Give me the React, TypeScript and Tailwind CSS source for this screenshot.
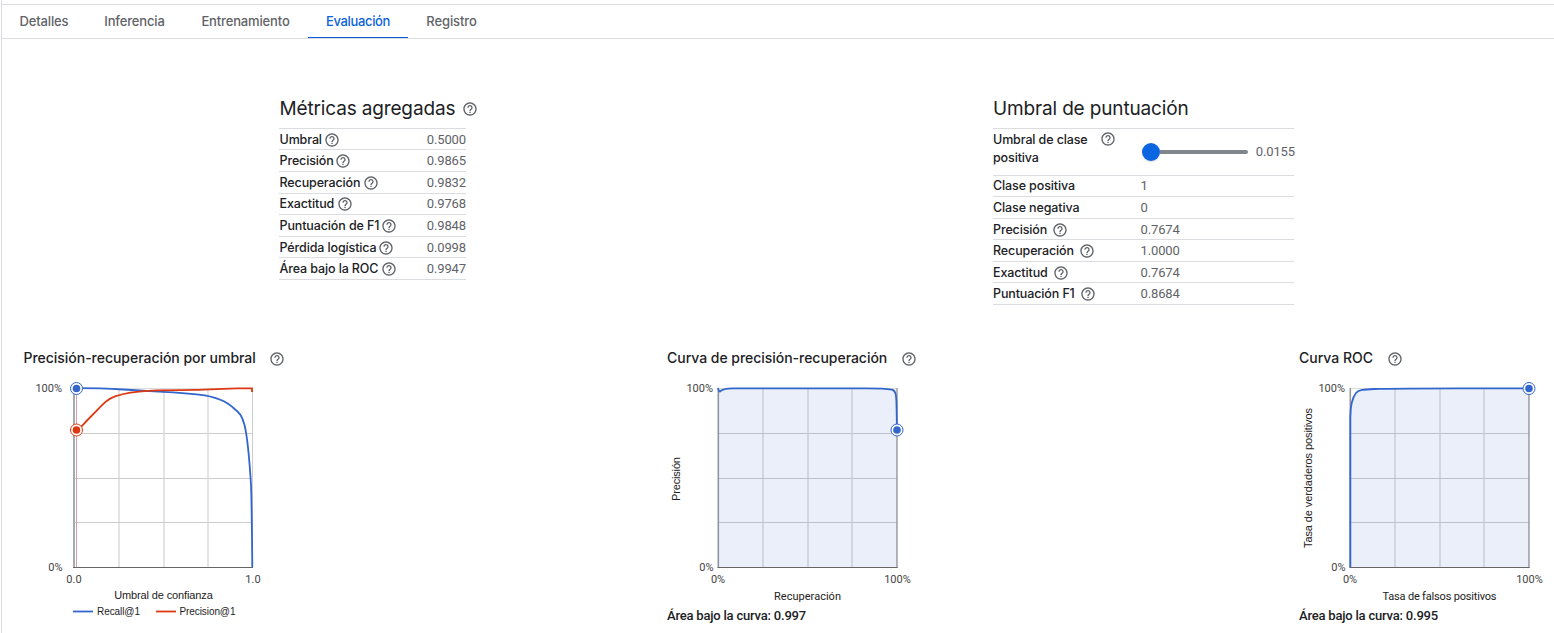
import type { ReactNode } from 'react';
import { MdHelpOutline } from 'react-icons/md';

const BLUE = '#3366cc';
const RED = '#dc3912';

function Help({ size = 16 }: { size?: number }) {
  return <MdHelpOutline size={size} className="shrink-0 text-[#5f6368]" />;
}

const TABS = [
  { label: 'Detalles', cls: 'w-[84px] mr-px tracking-[-0.15px]' },
  { label: 'Inferencia', cls: 'w-[95px] mr-px tracking-[-0.15px]' },
  { label: 'Entrenamiento', cls: 'w-[125px] tracking-[-0.15px]' },
  { label: 'Evaluación', cls: 'w-[100px] tracking-[-0.33px]', active: true },
  { label: 'Registro', cls: 'w-[87px] tracking-[-0.1px]' },
];

function Tabs() {
  return (
    <nav className="flex h-[35px] border-y border-[#dadce0]">
      {TABS.map((t) => (
        <button
          key={t.label}
          className={`flex h-[33px] items-center justify-center pt-px text-[13px] leading-none font-medium ${t.cls} ${
            t.active ? 'border-b border-[#0b5cd5] text-[#0b62dc]' : 'border-b border-transparent text-[#5f6368]'
          }`}
        >
          {t.label}
        </button>
      ))}
    </nav>
  );
}

const AGGREGATE = [
  { label: 'Umbral', value: '0.5000', h: 'h-[21px] pt-px', w: 'w-[45px]' },
  { label: 'Precisión', value: '0.9865', h: 'h-[22px]', w: 'w-[56px]' },
  { label: 'Recuperación', value: '0.9832', h: 'h-[22px]', w: 'w-[84px]' },
  { label: 'Exactitud', value: '0.9768', h: 'h-[21px]', w: 'w-[58px]' },
  { label: 'Puntuación de F1', value: '0.9848', h: 'h-[22px]', w: 'w-[102px]' },
  { label: 'Pérdida logística', value: '0.0998', h: 'h-[21px] pt-px', w: 'w-[99px]' },
  { label: 'Área bajo la ROC', value: '0.9947', h: 'h-[22px]', w: 'w-[102px]' },
];

const SCORE = [
  { label: 'Clase positiva', value: '1', h: 'h-[21px]', w: 'w-[90px]', help: false },
  { label: 'Clase negativa', value: '0', h: 'h-[22px]', w: 'w-[90px]', help: false },
  { label: 'Precisión', value: '0.7674', h: 'h-[21px] pt-px', w: 'w-[59px]', help: true },
  { label: 'Recuperación', value: '1.0000', h: 'h-[22px]', w: 'w-[86px]', help: true },
  { label: 'Exactitud', value: '0.7674', h: 'h-[21px] pt-px', w: 'w-[60px]', help: true },
  { label: 'Puntuación F1', value: '0.8684', h: 'h-[22px]', w: 'w-[87px]', help: true },
];

const LABEL = 'whitespace-nowrap text-[12.5px] font-[450] tracking-[-0.12px] text-[#202124]';
const VALUE = "font-['Roboto',sans-serif] text-[13px] tracking-[-0.12px] text-[#5f6368]";
const HEADING = 'shrink-0 text-[19px] leading-6 tracking-[-0.15px] whitespace-nowrap text-[#202124]';

function Aggregate() {
  return (
    <section className="w-[200px]">
      <div className="flex h-[33px] items-center pb-[6px]">
        <h2 className={`w-[183px] pl-[0.5px] ${HEADING}`}>Métricas agregadas</h2>
        <div className="pt-px"><Help /></div>
      </div>
      <div className="w-[187px] border-t border-[#dadce0]">
        {AGGREGATE.map((r) => (
          <div key={r.label} className={`flex items-center border-b border-[#dadce0] leading-5 ${r.h}`}>
            <span className={`pl-[0.5px] ${LABEL} ${r.w}`}>{r.label}</span>
            <Help />
            <span className={`ml-auto ${VALUE}`}>{r.value}</span>
          </div>
        ))}
      </div>
    </section>
  );
}

function Score() {
  return (
    <section className="w-[301px]">
      <div className="flex h-[33px] items-center pb-[6px]">
        <h2 className={HEADING}>Umbral de puntuación</h2>
      </div>
      <div className="border-t border-[#dadce0]">
        <div className="flex h-[47px] border-b border-[#dadce0]">
          <div className={`w-[107px] pt-[2px] leading-[18px] ${LABEL}`}>
            Umbral de clase
            <br />
            positiva
          </div>
          <div className="w-[42px] pt-[2px]"><Help /></div>
          <div className="flex h-[46px] w-[106px] items-center">
            <div className="size-[18px] shrink-0 rounded-full bg-[#0b65e0] shadow-sm" />
            <div className="h-[4px] grow rounded-r-full bg-[#80868b]" />
          </div>
          <span className={`-mr-px ml-auto leading-[46px] ${VALUE}`}>0.0155</span>
        </div>
        {SCORE.map((r) => (
          <div key={r.label} className={`flex items-center border-b border-[#dadce0] leading-5 ${r.h}`}>
            <div className="flex w-[147.5px] items-center">
              <span className={`${LABEL} ${r.w}`}>{r.label}</span>
              {r.help && <Help />}
            </div>
            <span className={VALUE}>{r.value}</span>
          </div>
        ))}
      </div>
    </section>
  );
}

/* Chart text: anchored at x, baseline y, drawn to a set length where one is given. */
function T({ x, y, len, children, arial, anchor = 'middle', size = 11, fill = '#222', rotate }: {
  x: number; y: number; len?: number; children: string; arial?: boolean; anchor?: 'start' | 'middle' | 'end'; size?: number; fill?: string; rotate?: boolean;
}) {
  return (
    <text
      x={x}
      y={y}
      textLength={len}
      textAnchor={anchor}
      fontSize={size}
      fill={fill}
      transform={rotate ? `rotate(-90 ${x} ${y})` : undefined}
      className={arial ? "font-['Liberation_Sans',sans-serif]" : "font-['Roboto',sans-serif]"}
    >
      {children}
    </text>
  );
}

/* Grid of the 179px plot whose top-left corner is at (x, 18.5). */
function Grid({ x }: { x: number }) {
  return (
    <g>
      {[45, 90, 134].map((d) => (
        <g key={d}>
          <line x1={x + d} x2={x + d} y1="18" y2="197" stroke="#d9d9d9" strokeWidth="1.4" />
          <line x1={x} x2={x + 179} y1={18.5 + d} y2={18.5 + d} stroke="#ccc" />
        </g>
      ))}
      <line x1={x} x2={x + 179} y1="18.5" y2="18.5" stroke="#ddd" />
    </g>
  );
}

function Dot({ x, y, color }: { x: number; y: number; color: string }) {
  return (
    <g>
      <circle cx={x} cy={y} r="6" fill="#fff" stroke={color} strokeWidth="1" />
      <circle cx={x} cy={y} r="3.8" fill={color} />
    </g>
  );
}

function Panel({ title, titleCls, width, children, area }: { title: string; titleCls: string; width: string; children: ReactNode; area?: string }) {
  return (
    <section className={`flex shrink-0 flex-col ${width}`}>
      <div className="flex h-[23px] items-start">
        <h3 className={`shrink-0 pt-px text-[14px] leading-5 font-medium whitespace-nowrap text-[#202124] ${titleCls}`}>{title}</h3>
        <div className="pt-[4px]"><Help /></div>
      </div>
      {children}
      {area && (
        <p className="pt-px font-['Roboto',sans-serif] text-[13px] leading-[18px] font-medium tracking-[-0.2px] whitespace-nowrap text-[#202124]">{area}</p>
      )}
    </section>
  );
}

function ThresholdChart() {
  return (
    <svg width="270" height="250" viewBox="0 0 270 250">
      <Grid x={51} />
      <line x1="229.5" x2="229.5" y1="18" y2="198" stroke="#ccc" />
      <line x1="51" x2="51" y1="18" y2="198" stroke="#aaa" strokeWidth="2" />
      <line x1="50" x2="230" y1="197.5" y2="197.5" stroke="#666" />
      <line x1="53.5" x2="53.5" y1="18" y2="197" stroke="#d3a0b5" />
      <path d="M53.5 18.2 C75 18.2 85 18.6 100 19.5 S128 21.2 140 21.8 S162 23 176 24.6 S202 29.5 211 38.5 C217 43 219 46 221.5 55 C224.5 67 226.5 90 228 115 C228.8 135 229 165 229.3 197" fill="none" stroke={BLUE} strokeWidth="1.8" />
      <path d="M54 60 C57.5 58 60.5 54 64.5 50 L72.5 42 C79 35 84 29 92 26.3 C102 23 113 21.3 125 20.8 S158 20 172 19.9 S202 18.3 215 18.3 H229 V22" fill="none" stroke={RED} strokeWidth="1.8" />
      <Dot x={53.5} y={18.5} color={BLUE} />
      <Dot x={53.5} y={60} color={RED} />
      <T x={39} y={22} anchor="end" fill="#444">100%</T>
      <T x={39.5} y={201} anchor="end" fill="#444">0%</T>
      <T x={51} y={213} fill="#444">0.0</T>
      <T x={230} y={213} fill="#444">1.0</T>
      <T x={140.5} y={229} len={98.5} arial>Umbral de confianza</T>
      <line x1="50" x2="70" y1="241.5" y2="241.5" stroke={BLUE} strokeWidth="1.8" />
      <T x={74} y={245} len={43} arial anchor="start" size={10}>Recall@1</T>
      <line x1="133" x2="153" y1="241.5" y2="241.5" stroke={RED} strokeWidth="1.8" />
      <T x={156.5} y={245} len={56} arial anchor="start" size={10}>Precision@1</T>
    </svg>
  );
}

function CurveChart({ x, line, area, dotX, dotY, yLabel, yLen, yX, yMid, xLabel, xLen, xMid }: {
  x: number; line: string; area: string; dotX: number; dotY: number; yLabel: string; yLen: number; yX: number; yMid: number; xLabel: string; xLen: number; xMid: number;
}) {
  return (
    <svg width="256" height="236" viewBox="0 0 256 236" className="overflow-visible">
      <Grid x={x} />
      <line x1={x + 0.3} x2={x + 0.3} y1="18" y2="198" stroke="#999" strokeWidth="1.6" />
      <line x1={x + 179} x2={x + 179} y1="18" y2="198" stroke="#999" strokeWidth="1.4" />
      <path d={area} fill={BLUE} fillOpacity="0.1" />
      <line x1={x - 0.5} x2={x + 179.5} y1="197.5" y2="197.5" stroke="#666" />
      <path d={line} fill="none" stroke={BLUE} strokeWidth="1.8" />
      <Dot x={dotX} y={dotY} color={BLUE} />
      <T x={x - 5} y={22} anchor="end" fill="#444">100%</T>
      <T x={x - 4.5} y={201} anchor="end" fill="#444">0%</T>
      <T x={x} y={213} fill="#444">0%</T>
      <T x={x + 179.5} y={213} fill="#444">100%</T>
      <T x={xMid} y={230} len={xLen}>{xLabel}</T>
      <T x={yX} y={yMid} len={yLen} arial rotate>{yLabel}</T>
    </svg>
  );
}

export default function App() {
  const pr = 'M51 18 C51.5 20 52 21.5 53 21.5 C54.5 19.5 57 18.7 66 18.4 H200 C212 18.4 220 18.8 225 19.6 C228.8 20.5 229.3 25 229.5 35 L230 60';
  const roc = 'M51.3 197 V47 C51.5 36 53 28 57 23 C60 19.3 66 19.5 80 18.8 C100 18.3 130 18.3 160 18.3 H230';
  return (
    <div className="flex h-[633px] w-[1554px] flex-col overflow-hidden bg-white pl-px font-['Inter',sans-serif]">
      <div className="flex grow flex-col border-l border-[#dadce0] pt-[4px]">
        <Tabs />
        <div className="flex h-[308px] pt-[56px] pl-[277px]">
          <Aggregate />
          <div className="w-[514px]" />
          <Score />
        </div>
        <div className="flex pl-[21px]">
          <Panel title="Precisión-recuperación por umbral" titleCls="w-[246px] pl-[0.5px] tracking-[-0.03px]" width="w-[644px]">
            <ThresholdChart />
          </Panel>
          <Panel title="Curva de precisión-recuperación" titleCls="w-[234px] tracking-[-0.03px]" width="w-[632px]" area="Área bajo la curva: 0.997">
            <CurveChart x={51} line={pr} area={`${pr} V197 H51 Z`} dotX={230} dotY={60} yLabel="Precisión" yLen={44} yX={13} yMid={109} xLabel="Recuperación" xLen={67} xMid={140.5} />
          </Panel>
          <Panel title="Curva ROC" titleCls="w-[88px]" width="w-[256px]" area="Área bajo la curva: 0.995">
            <CurveChart x={51} line={roc} area={`${roc} V197 Z`} dotX={230} dotY={18.5} yLabel="Tasa de verdaderos positivos" yLen={140} yX={13} yMid={108} xLabel="Tasa de falsos positivos" xLen={114} xMid={140.5} />
          </Panel>
        </div>
      </div>
    </div>
  );
}
